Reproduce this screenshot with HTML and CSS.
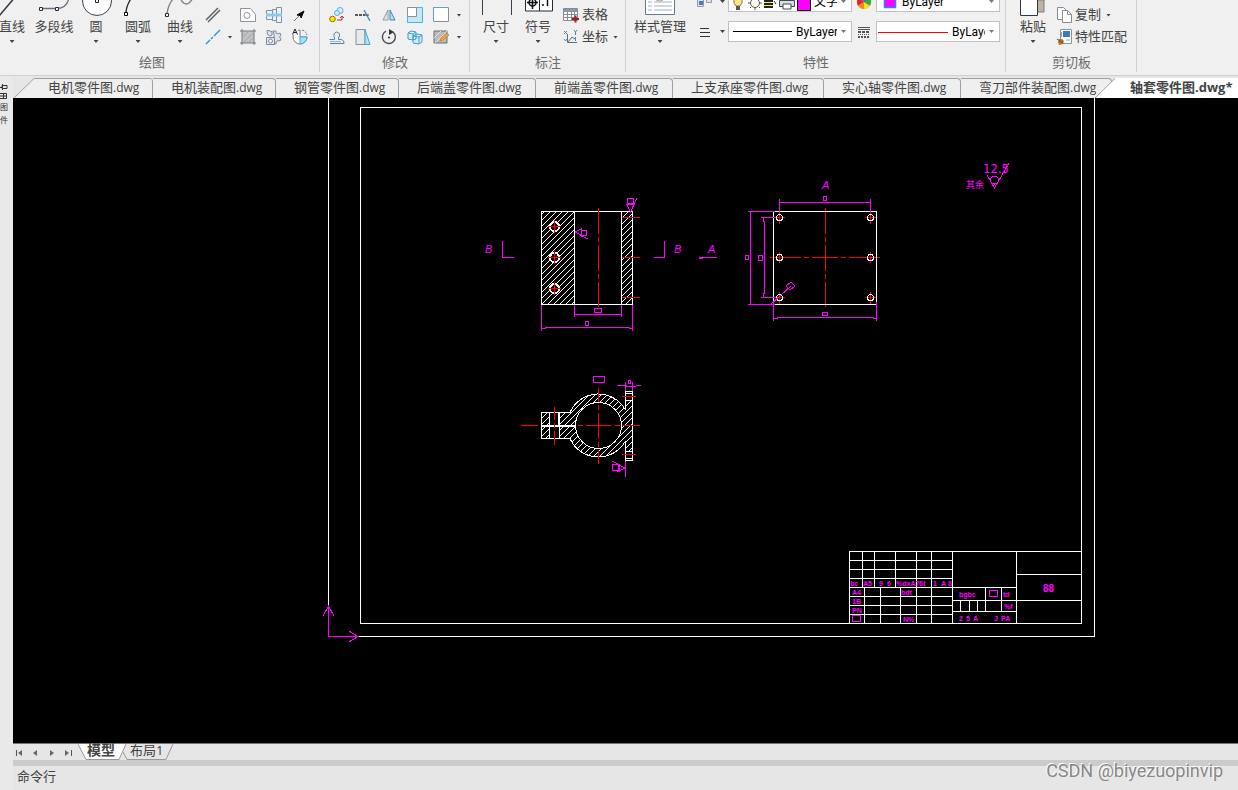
FILE: index.html
```html
<!DOCTYPE html>
<html lang="zh-CN">
<head>
<meta charset="utf-8">
<title>轴套零件图.dwg</title>
<link rel="stylesheet" href="styles.css">
</head>
<body>
<div class="app">
<header class="ribbon">
  <section class="panel panel-draw">
    <div class="panel-body">
      <button class="big"><svg width="42" height="18"><path d="M8 16L25 -4" stroke="#2c3440" stroke-width="1.5"/></svg><span>直线</span><i class="caret"></i></button>
      <button class="big"><svg width="42" height="18"><path d="M10 8.500H24Q34 8 36-2" fill="none" stroke="#6b7078" stroke-width="1.300"/><path d="M6.500 7.500h3v3h-3zM22.500 7.500h3v3h-3z" fill="#fff" stroke="#222b3a"/></svg><span>多段线</span><i class="caret hide"></i></button>
      <button class="big"><svg width="42" height="18"><circle cx="22" cy="1" r="14.500" fill="#fff" stroke="#3d4450"/><path d="M20.500 -.5h3v3h-3z" fill="#fff" stroke="#222b3a"/></svg><span>圆</span><i class="caret"></i></button>
      <button class="big"><svg width="42" height="18"><path d="M9 13Q9 6 15-3" fill="none" stroke="#222" stroke-width="1.300"/><path d="M7.500 12.500h3v3h-3z" fill="#fff" stroke="#000"/></svg><span>圆弧</span><i class="caret"></i></button>
      <button class="big"><svg width="42" height="18"><path d="M8 14Q9 5 14 -1M21-2Q27 10 34-2" fill="none" stroke="#7b8088" stroke-width="1.300"/><path d="M6.500 13.500h3v3h-3z" fill="#fff" stroke="#222b3a"/></svg><span>曲线</span><i class="caret"></i></button>
      <div class="tools tools-draw">
        <button class="tool" aria-label="双线"><svg viewBox="0 0 16 16"><path d="M1 13L13 1M3 15L15 3" stroke="#5f6368" stroke-width="1.500"/></svg></button><span></span>
        <button class="tool" aria-label="区域"><svg viewBox="0 0 16 16"><path d="M.5 1.500h10l5 6v7H.5z" fill="#fff" stroke="#8b929c"/><circle cx="7" cy="8.500" r="3" fill="none" stroke="#8b929c"/></svg></button>
        <button class="tool" aria-label="零件"><svg viewBox="0 0 16 16"><path d="M.5 3.500h6v9h-6zM6.500 2.500h4v11h-4zM10.500 .5h5v15h-5z" fill="#eef3f9" stroke="#8390a3"/><path d="M0 6.500h16v3H0z" fill="#8cc9f0"/></svg></button>
        <button class="tool" aria-label="箭头"><svg viewBox="0 0 16 16"><path d="M2 14L8 8" stroke="#777"/><path d="M12 4L9 11 8.500 8.500 5 8z" fill="#000" stroke="#000"/></svg></button>
        <button class="tool" aria-label="构造线"><svg viewBox="0 0 16 16"><path d="M1 15L5 11M6 10L8 8M9 7L15 1" stroke="#1d9bd8" stroke-width="1.400"/></svg></button><i class="caret"></i>
        <button class="tool" aria-label="填充"><svg viewBox="0 0 16 16"><path d="M2 2h12v12H2z" fill="#bfc3c6"/><path d="M0 2h16M2 0v16M14 0v16M0 14h16" stroke="#73787d" fill="none"/><path d="M2 9L9 2M3 14L14 3M8 14l6-6" stroke="#a1a6aa"/></svg></button>
        <button class="tool" aria-label="齿轮"><svg viewBox="0 0 16 16"><path d="M7 2h3v2l2 1 2-1 1 2-1.500 2L15 10l-1 2-2-.5-2 1.500v2H8V5z" fill="#dfe5ee" stroke="#7e899a"/><path d="M1 1.500h2.500l1 1.500 1.500-1V6l-2 1-2.500-1.500z" fill="#dfe5ee" stroke="#7e899a"/><path d="M.5 8.500h8v7h-8z" fill="#e4e9f0" stroke="#7e899a"/><circle cx="4.500" cy="12" r="2" fill="#fff" stroke="#7e899a"/></svg></button>
        <button class="tool" aria-label="视图"><svg viewBox="0 0 16 16"><path d="M8 8V1a7 7 0 1 0 7 7z" fill="#fff" stroke="#777"/><path d="M8 8h7a7 7 0 0 1-7 7z" fill="#ace0fa" stroke="#4aa4d0"/><path d="M10 1q4 1 5 5" fill="none" stroke="#777" stroke-dasharray="2 1"/><path d="M0 0h6v6H0z" fill="#f0f0f0"/><path d="M.5 5.500L3 0L5.500 5.500M1.500 3.500h3" fill="none" stroke="#222"/></svg></button>
      </div>
    </div>
    <h2 class="panel-title">绘图</h2>
  </section>

  <section class="panel panel-modify">
    <div class="panel-body">
      <div class="tools tools-modify">
        <button class="tool" aria-label="复制对象"><svg viewBox="0 0 16 16"><circle cx="11" cy="3.500" r="3" fill="#d7effb" stroke="#55aee0"/><circle cx="8" cy="6" r="2.500" fill="#d7effb" stroke="#55aee0"/><circle cx="3.500" cy="12" r="2.800" fill="#ffe100" stroke="#8c7b00"/><path d="M8 13h5V9m-2 2l2-2 2 2" fill="none" stroke="#a33"/></svg></button>
        <button class="tool" aria-label="修剪"><svg viewBox="0 0 16 16"><path d="M0 8h3M4 8h3M8 8h2" stroke="#222" stroke-width="1.500"/><path d="M9 3L15 14" stroke="#2a8fd0" stroke-width="1.300"/><path d="M10 8h4" stroke="#444"/></svg></button>
        <button class="tool" aria-label="镜像"><svg viewBox="0 0 16 16"><path d="M7 3v10H2z" fill="#e6e6e6" stroke="#999"/><path d="M9 3v10h5z" fill="#b4e1f8" stroke="#358cba"/></svg></button>
        <button class="tool" aria-label="缩放"><svg viewBox="0 0 16 16"><path d="M.5.5h15v15H.5z" fill="#c3e8f8" stroke="#53b1da"/><path d="M.5.5h9v9h-9z" fill="#fff" stroke="#87919b"/></svg></button>
        <button class="tool" aria-label="拉伸"><svg viewBox="0 0 16 16"><path d="M.5.5h15v14H.5z" fill="#fff" stroke="#8b8f94"/><path d="M.5 14V.5H15" stroke="#56aae0" fill="none" stroke-dasharray="2 1"/></svg></button><i class="caret"></i>
        <button class="tool" aria-label="偏移"><svg viewBox="0 0 16 16"><path d="M.5 10.500h5V9q-2-5 2-6q5 1 2 6v1.500h3q3 1 2.500 4H1" fill="none" stroke="#5b7fa0"/><path d="M1 12.500h11" stroke="#7fc0e8"/></svg></button>
        <button class="tool" aria-label="拔模"><svg viewBox="0 0 16 16"><path d="M1 .5h9v15H1z" fill="#e7e9eb" stroke="#8b929c"/><path d="M10 .5L15 15.500h-5z" fill="#b8e3f6" stroke="#4aa0cf"/></svg></button>
        <button class="tool" aria-label="旋转"><svg viewBox="0 0 16 16"><path d="M5 2.200a6.500 6.500 0 1 0 7 .8" fill="none" stroke="#444b54" stroke-width="1.400"/><path d="M8 0l5 3-5 3z" fill="#333"/><circle cx="8" cy="8.500" r="1" fill="#222"/></svg></button>
        <button class="tool" aria-label="阵列"><svg viewBox="0 0 16 16"><path d="M1 4l3-2 5 1v7l-3 1-5-1zM6 7l4-2 5 1v7l-3 2-6-1zM1 4l5 1 3-2M6 5v5M6 7l6 1 3-2M12 8v6" fill="#d1edfb" stroke="#3e9bd0"/></svg></button>
        <button class="tool" aria-label="编辑填充"><svg viewBox="0 0 16 16"><path d="M1 2h13v12H1z" fill="#bbb" stroke="#686d71"/><path d="M1 9l7-7M2 14L14 2" stroke="#ddd"/><path d="M7 12l1-3 6-5 2 2-6 5z" fill="#f2a63a" stroke="#b87324" stroke-width=".6"/></svg></button><i class="caret"></i>
      </div>
    </div>
    <h2 class="panel-title">修改</h2>
  </section>

  <section class="panel panel-note">
    <div class="panel-body">
      <button class="big"><svg width="42" height="18"><path d="M7.500 0v15M36.500 0v15" stroke="#3a414c"/></svg><span>尺寸</span><i class="caret"></i></button>
      <button class="big"><svg width="42" height="18"><path d="M8.500-4h27v15h-27zM22.500-4v15" fill="#fff" stroke="#222b3a"/><circle cx="15.500" cy="2.500" r="3.500" fill="none" stroke="#111" stroke-width="1.500"/><path d="M15.500-2v11M10 2.500h11M25 5h2M30.500-2v8" stroke="#111" stroke-width="1.500"/></svg><span>符号</span><i class="caret"></i></button>
      <div class="rows">
        <button class="row"><svg viewBox="0 0 16 16"><path d="M.5 1.500h14v12H.5z" fill="#fff" stroke="#858c94"/><path d="M1 2h13v3H1z" fill="#8c98a5"/><path d="M1 7.500h13M1 10.500h13M4.500 5v9M8.500 5v9M11.500 5v9" stroke="#858c94"/><path d="M9 12h7M12.500 8.500v7" stroke="#ad1820" stroke-width="2"/></svg><span>表格</span></button>
        <button class="row"><svg viewBox="0 0 16 16"><path d="M4.500 5v8.500H14M5 13l4-5 3 2" fill="none" stroke="#5f6b78"/><path d="M1 2l3 3M4 2L1 5M11 1l1.500 2L14 1M12.500 3v3M1 10l1.500 2L4 10M12.500 8v4" fill="none" stroke="#4587be"/></svg><span>坐标</span><i class="caret"></i></button>
      </div>
    </div>
    <h2 class="panel-title">标注</h2>
  </section>

  <section class="panel panel-props">
    <div class="panel-body">
      <button class="big wide"><svg width="42" height="18"><path d="M6.500-4h29v18.500h-29z" fill="#fff" stroke="#617a93"/><path d="M9 6h4M9 10h4M15 2h18M15 6h18M15 10h18M9 2h4" stroke="#9bb0cc"/><path d="M17 0q4 2 7 0" stroke="#c49a76" fill="none"/></svg><span>样式管理</span><i class="caret"></i></button>
      <div class="props">
        <button class="tool" aria-label="图层"><svg viewBox="0 0 16 16"><path d="M.5 3.500h6v9h-6zM9.500 4.500h5v4h-5z" fill="#dce3ea" stroke="#929ca8"/><path d="M2 7h4v4H2z" fill="#427fbb"/></svg></button><i class="caret"></i>
        <div class="combo">
          <svg class="layer-icons" width="82" height="20"><path d="M5 5h8v6l-2 3H7l-2-3z" fill="#ffe58b" stroke="#837646"/><path d="M7 14h4v4H7z" fill="#555"/><circle cx="26" cy="11" r="4.500" fill="#fffdf0" stroke="#555"/><path d="M26 4v2M26 16v2M19 11h2M31 11h2M21 16l1-1M30 15l1 1" stroke="#555"/><path d="M35 8h9v8h-9z" fill="#222"/><path d="M35 10.500h9M35 13.500h9" stroke="#f5ee74"/><path d="M45 9l2 3" stroke="#222"/><path d="M50.500 8.500h15v6h-15zM54 4h9v4h-9z" fill="#d6dce4" stroke="#424851"/><path d="M54 12h8v5h-8z" fill="#fff" stroke="#424851"/><path d="M68.500 3.500h13v15h-13z" fill="#f0f" stroke="#000"/></svg>
          <select aria-label="图层"><option>文字</option></select><i class="caret grey"></i>
        </div>
        <svg class="pic" viewBox="0 0 16 16"><circle cx="8" cy="8" r="7" fill="#7bc143"/><path d="M8 8V1a7 7 0 0 0-6 3.500z" fill="#b04fb5"/><path d="M8 8L2 4.500a7 7 0 0 0 0 7z" fill="#e22"/><path d="M8 8l-6 3.500A7 7 0 0 0 8 15z" fill="#f58a1c"/><path d="M8 8v7a7 7 0 0 0 6-3.500z" fill="#f6dc1a"/><path d="M8 8l6 3.500a7 7 0 0 0 0-7z" fill="#35a936"/><path d="M8 8l6-3.500A7 7 0 0 0 8 1z" fill="#396dce"/></svg>
        <div class="combo">
          <svg width="22" height="20"><path d="M7.500 3.500h11v12h-11z" fill="#f0f" stroke="#1c8cea" stroke-width="1.500"/></svg>
          <select aria-label="颜色"><option>ByLayer</option></select><i class="caret grey"></i>
        </div>
        <button class="tool" aria-label="线宽"><svg viewBox="0 0 16 16"><path d="M3 4.500h9M3 8.500h10M3 12.500h10" stroke="#333"/></svg></button><i class="caret"></i>
        <div class="combo">
          <svg width="64" height="20"><path d="M4 9.500h59" stroke="#000"/></svg>
          <select aria-label="线宽值"><option>ByLayer</option></select><i class="caret grey"></i>
        </div>
        <svg class="pic" viewBox="0 0 16 16"><path d="M2 3.500h12M2 5.500h12" stroke="#555"/><path d="M2 8h12" stroke="#555" stroke-width="2" stroke-dasharray="3 1"/><path d="M2 10.500h12" stroke="#555" stroke-dasharray="1 1"/><path d="M2 13h12" stroke="#555" stroke-width="2" stroke-dasharray="2 1"/></svg>
        <div class="combo">
          <svg width="72" height="20"><path d="M1 10.500h70" stroke="red"/></svg>
          <select aria-label="线型"><option>ByLayer</option></select><i class="caret grey"></i>
        </div>
      </div>
    </div>
    <h2 class="panel-title">特性</h2>
  </section>

  <section class="panel panel-clip">
    <div class="panel-body">
      <button class="big"><svg width="42" height="18"><path d="M22 0h10v12H22z" fill="#bdb2a5" stroke="#84786c"/><path d="M8.500-3h17v18.500h-17z" fill="#fff" stroke="#2c3644"/></svg><span>粘贴</span><i class="caret"></i></button>
      <div class="rows">
        <button class="row"><svg viewBox="0 0 16 16"><path d="M1.500.5h6l3 3v9h-9z" fill="#fff" stroke="#878c92"/><path d="M6.500 3.500h5l4 4v8h-9z" fill="#fff" stroke="#878c92"/><path d="M11.500 3.500v4h4" fill="none" stroke="#878c92"/></svg><span>复制</span><i class="caret"></i></button>
        <button class="row"><svg viewBox="0 0 16 16"><path d="M4.500.5h11v14h-11z" fill="#fff" stroke="#87929f"/><path d="M7 2h7v6H7z" fill="#357ebb"/><path d="M5.500 3v5M10 11h4" stroke="#92a5b8"/><path d="M3 10h3l2 2-1 3-4 1-1-3z" fill="#b8732b"/><path d="M1 10l6 4" stroke="#6a4b29"/></svg><span>特性匹配</span></button>
      </div>
    </div>
    <h2 class="panel-title">剪切板</h2>
  </section>
</header>

<div class="workspace">
  <aside class="side">
    <svg width="8" height="17"><path d="M2 2.500h5v3H2zM2.500 1v6M2 4.500h-2M0 10.500h6.500v5H0M0 13h6M3.500 11v5" fill="none" stroke="#333"/></svg>
    <span>图件</span>
  </aside>
  <main class="main">
    <nav class="tabs">
      <button class="tab first"><svg width="20" height="20"><path d="M0 20L20 0V20z" fill="#efefef"/><path d="M0 20L20 .5" stroke="#a0a0a0" fill="none"/></svg><span>电机零件图<small>.dwg</small></span></button>
      <button class="tab c5"><span>电机装配图<small>.dwg</small></span></button>
      <button class="tab c5"><span>钢管零件图<small>.dwg</small></span></button>
      <button class="tab c6"><span>后端盖零件图<small>.dwg</small></span></button>
      <button class="tab c6"><span>前端盖零件图<small>.dwg</small></span></button>
      <button class="tab c7"><span>上支承座零件图<small>.dwg</small></span></button>
      <button class="tab c6"><span>实心轴零件图<small>.dwg</small></span></button>
      <button class="tab c7"><span>弯刀部件装配图<small>.dwg</small></span></button>
      <button class="tab active"><svg width="20" height="20"><path d="M0 20L20 .5V20z" fill="#fff"/><path d="M0 20L20 .5" stroke="#a0a0a0"/></svg><span>轴套零件图.dwg*</span></button>
    </nav>
    <div class="canvas">
      <svg class="drawing" width="1225" height="645" viewBox="13 98 1225 645">
        <defs>
          <pattern id="hatch" width="6" height="6" patternUnits="userSpaceOnUse"><path d="M-1 7L7-1M-1 1L1-1M5 7L7 5" stroke="#fff"/></pattern>
        </defs>
        <!-- sheet borders and title block -->
        <g class="w">
          <path d="M328.500 98V636.500H1094.500V98M360.500 107.500H1081.500V623.500H360.500z"/>
          <path d="M849.500 623V551.500H1081M849.500 560.500H952M849.500 569.500H952M849.500 578.500H952M849.500 587.500H1016M849.500 596.500H952M849.500 605.500H952M849.500 614.500H952"/>
          <path d="M862.500 551V587M874.500 551V587M895.500 551V587M916.500 551V623M931.500 551V623M952.500 551V623M864.500 587V623M880.500 587V623M900.500 587V623"/>
          <path d="M1016.500 551V623M985.500 587V611M1001.500 587V611M960.500 600V611M969.500 600V611M977.500 600V611M952 600.500H1081M952 611.500H1016M1016 574.500H1081"/>
        </g>
        <g class="m"><path d="M989.500 590.500h8v6h-8zM852.500 615.500h8v6h-8z"/></g>
        <g class="tiny">
          <text x="850" y="586">bc</text><text x="863" y="586">A5</text><text x="879" y="586">9</text><text x="887" y="586">6</text><text x="896" y="586">%dxA7</text><text x="919" y="586">6t</text><text x="933" y="586">1</text><text x="941" y="586">A</text><text x="948" y="586">8</text>
          <text x="852" y="595">A4</text><text x="852" y="604">1B</text><text x="852" y="613">PN</text><text x="901" y="595">bdt</text><text x="903" y="622">N%</text>
          <text x="959" y="597">bgbc</text><text x="1003" y="597">td</text><text x="1004" y="609">%f</text><text x="959" y="621">2</text><text x="966" y="621">5</text><text x="973" y="621">A</text><text x="994" y="621">J</text><text x="1001" y="621">PA</text>
          <text class="name" x="1043" y="592">88</text>
        </g>
        <!-- section B-B -->
        <path d="M541 211h34v93h-34zM621 211h12v93h-12z" fill="url(#hatch)"/>
        <g class="w">
          <path d="M541.500 211.500H632.500V304.500H541.500zM574.500 211V304M621.500 211V304"/>
          <circle class="hole" cx="554.500" cy="226.500" r="4.500"/><circle class="hole" cx="554.500" cy="257.500" r="4.500"/><circle class="hole" cx="554.500" cy="288.500" r="4.500"/>
        </g>
        <g class="r">
          <path d="M548 226.500h13M554.500 220v13M548 257.500h13M554.500 251v13M548 288.500h13M554.500 282v13"/>
          <path d="M598.500 208V234M598.500 237V242M598.500 245V271M598.500 274V279M598.500 282V307M622 217.500H640M622 257.500H640M622 297.500H640"/>
        </g>
        <g class="m">
          <path d="M574.500 305V317M621.500 305V317M574 314.500H621M594.500 308.500h7v4h-7zM541.500 305V331M632.500 305V331M541 328.500H545V327.500H629V328.500H632M585.500 321.500h3v4h-3z"/>
          <path d="M627.500 198.500h6v5h-6zM626 204.500h9M627 205L630.500 212L637 198M581.500 230.500h5v5h-5zM581.500 228V237M575 232L581 229M575 232L588 239"/>
          <path d="M502.500 241V257.500H514M664.500 241V257.500H654M699 257.500H717M699 258.500H703"/>
        </g>
        <g class="mark"><text x="485" y="253">B</text><text x="674" y="253">B</text><text x="708" y="253">A</text><text x="822" y="189">A</text></g>
        <!-- plate view -->
        <g class="r"><path d="M825.500 208V234M825.500 237V242M825.500 245V271M825.500 274V279M825.500 282V307M770 257.500H801M804 257.500H809M812 257.500H838M841 257.500H846M849 257.500H880"/>
          <path d="M773 217.500h12M779.500 212v12M773 297.500h12M779.500 292v12M779.500 252v11M865 217.500h11M870.500 212v12M870.500 252v11M865 297.500h11M870.500 292v12"/></g>
        <g class="w"><path d="M773.500 211.500H876.500V304.500H773.500z"/>
          <circle cx="779.500" cy="217.500" r="3"/><circle cx="779.500" cy="257.500" r="3"/><circle cx="779.500" cy="297.500" r="3"/><circle cx="870.500" cy="217.500" r="3"/><circle cx="870.500" cy="257.500" r="3"/><circle cx="870.500" cy="297.500" r="3"/></g>
        <g class="m">
          <path d="M779.500 199V212M870.500 199V212M779 202.500H870M823.500 196.500h3v4h-3zM748 211.500H775M748 304.500H775M750.500 211V304M745.500 255.500h3v4h-3zM761 217.500H775M761 297.500H775M763.500 217V222M764.500 221V294M763.500 293V297M758.500 255.500h4v5h-4z"/>
          <path d="M773.500 302V321M876.500 302V321M773 318.500H777V317.500H873V318.500H876M822.500 312.500h5v3h-5zM771 304L791 286M786 286L791 282L795 286L790 290z"/>
        </g>
        <!-- clamp end view -->
        <path fill-rule="evenodd" fill="url(#hatch)" d="M541 412H570A31 31 0 0 1 625 410V391H633V461H625V441A31 31 0 0 1 570 438H541zM598.500 402.500a23 23 0 1 0 .1 0zM550 412H559V438H550zM626 392H632V400H626zM626 451H632V460H626z"/>
        <g class="w">
          <path d="M570 412.500H541.500V438.500H570A31 31 0 0 0 625.500 441V460.500H632.500V391.500H625.500V410A31 31 0 0 0 570 412.500"/>
          <circle cx="598.500" cy="425.500" r="23"/>
          <path d="M541 425.500H575M541 426.500H575M549.500 412V438M558.500 412V425M559.500 412V438M625 393.500H632M625 400.500H632M625 451.500H632M625 458.500H632"/>
        </g>
        <g class="r"><path d="M521 425.500H538M578 425.500H583M586 425.500H611M615 425.500H620M623 425.500H640M598.500 388V402M598.500 405V410M598.500 413V439M598.500 442V447M598.500 450V464M554.500 407V420M554.500 423V428M554.500 431V445M622 396.500H636M622 454.500H636"/></g>
        <g class="m"><path d="M593.500 376.500h11v6h-11zM625.500 382V391M632.500 382V391M617 385.500H625L628 386.500H632L641 385.500M628.500 380.500h2v3h-2zM625.500 461V477M612.500 464.500h6v6h-6zM612 461L625 468L617 472M619.500 464V472"/></g>
        <!-- surface finish note -->
        <g class="m"><path d="M987 175L994.500 188L1009 163"/><circle cx="994.500" cy="180" r="4"/></g>
        <text class="finish" x="983" y="173">12.5</text><text class="rest" x="966" y="188">其余</text>
        <!-- coordinate axes -->
        <g class="m"><path d="M328.500 606V636.500H358M323 616L328.500 606L334 616M349 631L358 636.500L349 642"/></g>
      </svg>
    </div>
    <div class="sheets">
      <div class="sheet-nav">
        <button aria-label="第一页"><svg viewBox="0 0 8 8"><path d="M1.500 1v6" stroke="#555"/><path d="M7 1v6L3 4z" fill="#666"/></svg></button>
        <button aria-label="上一页"><svg viewBox="0 0 8 8"><path d="M6 1v6L2 4z" fill="#666"/></svg></button>
        <button aria-label="下一页"><svg viewBox="0 0 8 8"><path d="M2 1v6l4-3z" fill="#666"/></svg></button>
        <button aria-label="最后一页"><svg viewBox="0 0 8 8"><path d="M1 1v6l4-3z" fill="#666"/><path d="M7.500 1v6" stroke="#555"/></svg></button>
      </div>
      <button class="sheet current"><svg width="9" height="16"><path d="M0 0L8 15.500H9V0z" fill="#fff"/><path d="M0 0L8 15.500H9" fill="none" stroke="#999"/></svg><span>模型</span><svg width="9" height="16"><path d="M0 0H9L2 15.500H0z" fill="#fff"/><path d="M9 0L2 15.500H0" fill="none" stroke="#999"/></svg></button>
      <button class="sheet"><svg width="6" height="16"><path d="M0 8L4 15.500H6" fill="none" stroke="#999"/></svg><span>布局1</span><svg width="9" height="16"><path d="M9 0L2 15.500H0" fill="none" stroke="#999"/></svg></button>
    </div>
    <div class="splitter"></div>
    <footer class="command">命令行</footer>
  </main>
</div>
<div class="watermark">CSDN @biyezuopinvip</div>
</div>
</body>
</html>
```

FILE: styles.css
```css
* { box-sizing: border-box; }
body { margin: 0; background: #e6e6e6; color: #444; font: 13px/18px "Open Sans", "Noto Sans CJK SC", sans-serif; }
button { margin: 0; padding: 0; border: 0; background: none; color: inherit; font: inherit; }
svg { display: block; flex: none; }
i { font-style: normal; }

.app { position: relative; display: flex; flex-direction: column; height: 100vh; overflow: hidden; }

/* ribbon */
.ribbon { display: flex; height: 76px; flex: none; background: #f0f0f0; border-bottom: 1px solid #d0d0d0; overflow: hidden; }
.panel { display: flex; flex-direction: column; flex: none; padding-bottom: 4px; position: relative; }
.panel::after { content: ""; position: absolute; top: 0; right: 0; bottom: 3px; width: 1px; background: #d2d2d2; }
.panel-body { display: flex; align-items: flex-end; height: 53px; padding-bottom: 5px; }
.panel-title { margin: 0; font-size: 13px; line-height: 18px; font-weight: 400; color: #6a6a6a; text-align: center; }
.panel-draw { width: 336px; margin-left: -16px; }
.panel-draw .panel-body { padding-left: 7px; }
.panel-modify { width: 150px; }
.panel-modify .panel-body { padding-left: 4px; }
.panel-note { width: 156px; }
.panel-note .panel-body { padding-left: 5px; }
.panel-props { width: 380px; }
.panel-props .panel-body { padding-left: 4px; }
.panel-clip { width: 131px; }
.panel-clip .panel-body { padding-left: 6px; }
.big { display: flex; flex-direction: column; align-items: center; width: 42px; height: 48px; white-space: nowrap; }
.big span, .row span { line-height: 16px; padding-bottom: 2px; }
.big .caret { margin-top: 4px; }
.wide { width: 60px; }
.caret { width: 5px; height: 3px; flex: none; background: #444; clip-path: polygon(0 0, 100% 0, 50% 100%); }
.caret.grey { background: #777; }
.caret.hide { visibility: hidden; }
.tools { display: grid; grid-auto-rows: 22px; align-items: center; }
.tools-draw { grid-template-columns: 24px 10px 26px 26px 26px; }
.tools-modify { grid-template-columns: repeat(5, 26px) 10px; }
.tools .caret, .props .caret { justify-self: center; }
.tool { display: grid; place-items: center; height: 22px; }
.tool svg, .row svg, .pic { width: 16px; height: 16px; }
.pic { justify-self: center; }
.rows { display: flex; flex-direction: column; padding-left: 4px; }
.panel-clip .rows { padding-left: 2px; }
.row { display: flex; align-items: center; height: 22px; gap: 3px; white-space: nowrap; }
.row .caret { margin-left: 2px; }
.props { display: grid; grid-template-columns: 24px 7px 124px 20px 124px; grid-auto-rows: 21px; gap: 9px 2px; align-items: center; padding-bottom: 6px; margin-left: 3px; }
.props > .tool { height: 20px; }
.combo { display: flex; align-items: center; height: 21px; padding-right: 5px; background: #fff; border: 1px solid #c0c0c0; overflow: hidden; }
.combo select { appearance: none; flex: 1; min-width: 0; margin: 0 4px 0 3px; padding: 0; border: 0; background: transparent; color: #000; font: 12px/18px Roboto, "Noto Sans CJK SC", sans-serif; overflow: hidden; text-overflow: clip; }

/* document area */
.workspace { display: flex; flex: 1; min-height: 0; }
.side { width: 13px; flex: none; padding-top: 7px; overflow: hidden; background: #e9e9e9; color: #333; }
.side span { display: block; width: 8px; font-size: 8px; line-height: 13px; word-break: break-all; }
.main { display: flex; flex-direction: column; flex: 1; min-width: 0; }
.tabs { display: flex; align-items: flex-end; height: 22px; flex: none; padding-left: 1px; overflow: hidden; }
.tab { display: flex; align-items: center; height: 20px; flex: none; padding: 0 0 0 18px; border-top: 1px solid #a0a0a0; border-right: 1px solid #a0a0a0; border-top-right-radius: 4px; background: #efefef; white-space: nowrap; }
.tab span { line-height: 17px; padding-bottom: 2px; }
.tab small { font-size: 12px; }
.c5 { width: 123px; }
.c6 { width: 137px; }
.c7 { width: 151px; }
.tab.first { width: 139px; padding-left: 0; gap: 14px; border-top: 0; background: linear-gradient(#a0a0a0, #a0a0a0) 20px 0 / 100% 1px no-repeat, linear-gradient(#efefef, #efefef) 20px 0 no-repeat; }
.tab.active { flex: 1 0 auto; margin-left: -17px; padding: 0 6px 0 0; gap: 15px; border: 0; border-radius: 0; background: linear-gradient(#fff, #fff) 20px 0 no-repeat; font-weight: 700; }
.canvas { flex: 1; min-height: 0; overflow: hidden; background: #000; }

/* drawing */
.drawing { shape-rendering: crispEdges; }
.w, .m, .r { fill: none; stroke-width: 1; }
.w { stroke: #fff; }
.m { stroke: #f0f; }
.r { stroke: #f00; }
.hole { fill: #000; stroke-width: 2; }
.tiny { fill: #f0f; font: 700 7px "Liberation Sans Narrow", "Liberation Sans", sans-serif; }
.tiny .name { font-size: 10px; }
.mark { fill: #f0f; font: italic 11px "Liberation Sans", sans-serif; }
.finish { fill: #f0f; font: 13px "Liberation Sans Narrow", "DejaVu Sans Condensed", sans-serif; }
.rest { fill: #f0f; font: 9px "Noto Sans CJK SC", sans-serif; }

/* sheets and command line */
.sheets { display: flex; height: 17px; flex: none; border-top: 1px solid #777; }
.sheet-nav { display: flex; width: 65px; align-items: center; justify-content: space-between; padding: 2px 6px 0 2px; }
.sheet-nav svg { width: 8px; height: 8px; }
.sheet { display: flex; height: 16px; line-height: 12px; }
.sheet span { height: 16px; border-bottom: 1px solid #999; }
.sheet.current span { background: #fff; font-size: 14px; font-weight: 700; padding-right: 2px; }
.sheet:last-child { margin-left: -3px; }
.sheet:last-child span { padding: 0 1px; }
.splitter { height: 6px; flex: none; background: #cbcbcb; }
.command { height: 24px; flex: none; padding: 1px 4px; }
.watermark { position: absolute; right: 15px; bottom: 8px; color: #888; font: 18px/22px Roboto, sans-serif; text-shadow: -1px -1px 0 #fff; }
```
